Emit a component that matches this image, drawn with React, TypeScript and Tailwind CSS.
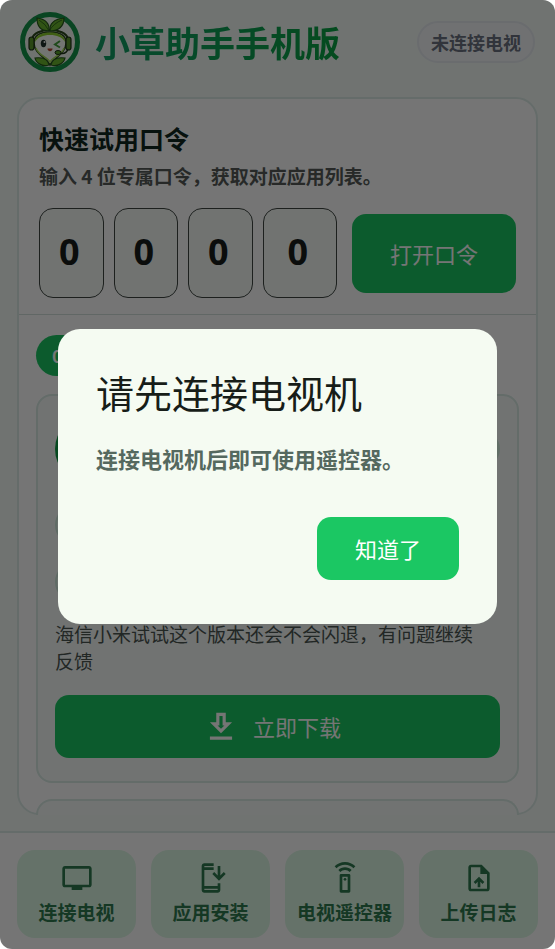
import React, { useState } from 'react';
import type { IconType } from 'react-icons';
import {
  MdOutlineDownload,
  MdOutlineInstallMobile,
  MdOutlineSettingsRemote,
  MdOutlineTv,
  MdOutlineUploadFile,
} from 'react-icons/md';

const navItems: { label: string; icon: IconType }[] = [
  { label: '连接电视', icon: MdOutlineTv },
  { label: '应用安装', icon: MdOutlineInstallMobile },
  { label: '电视遥控器', icon: MdOutlineSettingsRemote },
  { label: '上传日志', icon: MdOutlineUploadFile },
];

const Logo: React.FC = () => (
  <svg viewBox="0 0 60 60" className="size-[60px] shrink-0" role="img" aria-label="小草助手">
    <circle cx="30" cy="30" r="27.5" fill="#f4faf4" stroke="#14964a" strokeWidth="5" />
    {/* headset */}
    <path d="M12 27C14 15 46 15 48 27" fill="none" stroke="#2c4a1e" strokeWidth="2" />
    {/* head */}
    <path
      d="M30 53C27 46 14 42 14 31C14 23 21 20 30 20C39 20 46 23 46 31C46 42 33 46 30 53Z"
      fill="#fbfff8"
      stroke="#2c4a1e"
      strokeWidth="1.5"
    />
    <path
      d="M15 30C15 23 22 20.5 30 20.5C38 20.5 45 23 45 30C42 25 37 23 30 23C23 23 18 25 15 30Z"
      fill="#8cd02c"
    />
    <path d="M16 36C18 43 27 45 30 50C33 45 42 43 44 36" fill="none" stroke="#a8dc5a" strokeWidth="1.5" />
    <rect x="9" y="25" width="5" height="13" rx="2.5" fill="#5c9a2c" stroke="#1f3518" strokeWidth="1.2" />
    <rect x="46" y="25" width="5" height="13" rx="2.5" fill="#5c9a2c" stroke="#1f3518" strokeWidth="1.2" />
    {/* leaves */}
    <path d="M29 19C20 19 17 14 17 6C24 7 30 10 29 19Z" fill="#6bb82f" stroke="#27591d" strokeWidth="1.2" />
    <path d="M30 19C29 10 36 7 44 6C44 14 39 19 30 19Z" fill="#6bb82f" stroke="#27591d" strokeWidth="1.2" />
    <path d="M19 8Q26 12 29 19Q34 11 42 8" fill="none" stroke="#27591d" strokeWidth="0.8" />
    <path d="M29 53C22 55 16 51 15 46C22 45 28 47 29 53Z" fill="#6bb82f" stroke="#27591d" strokeWidth="1.2" />
    <path d="M31 53C38 55 44 51 45 46C38 45 32 47 31 53Z" fill="#6bb82f" stroke="#27591d" strokeWidth="1.2" />
    {/* face */}
    <ellipse cx="23.5" cy="31.5" rx="2.7" ry="3.7" fill="#20302c" />
    <circle cx="24.5" cy="30" r="1" fill="#fff" />
    <path d="M40 29L35 32.5L40 35.5" fill="none" stroke="#45a23c" strokeWidth="2" />
    <path d="M27.5 36.5H32.5C32.5 40 27.5 40 27.5 36.5Z" fill="#b5452e" />
    <path d="M48 37Q46 43 39 41" fill="none" stroke="#1f3518" strokeWidth="1.5" />
    <ellipse cx="38" cy="40.5" rx="3" ry="2" fill="#5da52c" stroke="#1f3518" strokeWidth="1" />
  </svg>
);

const CodeForm: React.FC = () => (
  <form className="border-b border-[#d3e0dc] px-5 pt-[21px] pb-4" onSubmit={(e) => e.preventDefault()}>
    <h2 className="text-[25px] leading-9 font-bold text-[#10291f]">快速试用口令</h2>
    <p className="mt-[6px] text-[19px] leading-7 font-bold text-[#555b58]">
      输入 4 位专属口令，获取对应应用列表。
    </p>
    <div className="mt-[18px] flex items-center gap-[15px]">
      <div className="grid flex-1 grid-cols-4">
        {[1, 2, 3, 4].map((n) => (
          <div key={n} className="pr-[10px] last:pr-0">
            <input
              aria-label={`口令第 ${n} 位`}
              defaultValue="0"
              maxLength={1}
              inputMode="numeric"
              className="h-[90px] w-full rounded-[14px] border border-[#3f4642] bg-[#f6fbf7] pr-1 pb-1 text-center font-['Noto_Sans'] text-[36px] font-bold text-[#191e1b]"
            />
          </div>
        ))}
      </div>
      <button type="submit" className="h-[79px] w-[164px] rounded-[14px] bg-[#1bc763] text-[22px] text-white">
        打开口令
      </button>
    </div>
  </form>
);

const AppItem: React.FC = () => (
  <article className="rounded-[16px] border-2 border-[#d9ebe5] bg-[#f6fbf9] px-[17px] pt-[19px] pb-[23px]">
    <div className="flex items-center justify-between">
      <span className="size-[68px] rounded-full bg-[#0fa047]" />
      <span className="h-9 w-24 rounded-full bg-[#d3efdf]" />
    </div>
    <div className="mt-[22px] flex flex-col items-start gap-[17px]">
      <span className="h-10 w-40 rounded-full border-2 border-[#cfe9dc] bg-[#eef8f2]" />
      <span className="h-10 w-40 rounded-full border-2 border-[#cfe9dc] bg-[#eef8f2]" />
    </div>
    <p className="mt-[18px] pr-4 text-[19px] leading-[27px] text-[#4b5551]">
      海信小米试试这个版本还会不会闪退，有问题继续反馈
    </p>
    <button
      type="button"
      className="mt-[21px] flex h-[63px] w-full items-center justify-center gap-[13px] rounded-[14px] bg-[#1bc763] pr-3 text-[22px] text-white"
    >
      <MdOutlineDownload className="size-[38px]" />
      立即下载
    </button>
  </article>
);

const App: React.FC = () => {
  const [open, setOpen] = useState(true);

  return (
    <div className="min-h-screen bg-white font-['Noto_Sans_CJK_SC',sans-serif]">
      <div className="flex min-h-screen flex-col overflow-hidden rounded-[12px] bg-[#f5faf7]">
        <header className="flex items-center px-5 py-3">
          <Logo />
          <h1 className="ml-[15px] bg-linear-to-r from-[#12a066] to-[#0aa343] bg-clip-text text-[35px] leading-[60px] font-bold whitespace-nowrap text-transparent">
            小草助手手机版
          </h1>
          <span className="ml-auto rounded-full border-2 border-[#e6ebf0] bg-[#f4f6f9] px-3 py-[5px] text-[18px] leading-7 font-bold whitespace-nowrap text-[#6b7280]">
            未连接电视
          </span>
        </header>

        <main className="mx-[17px] mt-[13px] mb-4 flex flex-1 flex-col rounded-[22px] border-2 border-[#dcece7] bg-white">
          <CodeForm />
          <div className="-mb-[2px] flex flex-1 flex-col px-[17px] pt-5">
            <button
              type="button"
              className="mb-[18px] h-[41px] self-start rounded-full bg-[#1bc763] px-4 text-[18px] font-bold text-white"
            >
              0000
            </button>
            <AppItem />
            <div className="mt-4 min-h-4 flex-1 rounded-t-[16px] border-2 border-b-0 border-[#d9ebe5] bg-[#f6fbf9]" />
          </div>
        </main>

        <nav className="grid grid-cols-4 gap-[15px] border-t-2 border-[#dcece7] bg-white px-[17px] pt-[17px] pb-[11px]">
          {navItems.map(({ label, icon: Icon }) => (
            <button
              key={label}
              type="button"
              className="flex h-[88px] flex-col items-center justify-center gap-1 rounded-[18px] bg-[#dcf8e5] text-[19px] leading-7 font-bold whitespace-nowrap text-[#2f7a50]"
            >
              <Icon className="size-8" />
              {label}
            </button>
          ))}
        </nav>
      </div>

      {open && (
        <div className="fixed inset-0 flex items-center justify-center rounded-[12px] bg-black/54 px-[58px] pt-1">
          <div
            role="dialog"
            aria-modal="true"
            aria-labelledby="dialog-title"
            className="flex w-full flex-col rounded-[22px] bg-[#f5fbf2] px-[38px] pt-9 pb-[44px]"
          >
            <h2 id="dialog-title" className="text-[38px] leading-[54px] text-[#171d18]">
              请先连接电视机
            </h2>
            <p className="mt-[23px] text-[22px] leading-8 font-bold text-[#55695f]">
              连接电视机后即可使用遥控器。
            </p>
            <button
              type="button"
              onClick={() => setOpen(false)}
              className="mt-[43px] h-[63px] w-[142px] self-end rounded-[14px] bg-[#1bc763] text-[22px] text-white"
            >
              知道了
            </button>
          </div>
        </div>
      )}
    </div>
  );
};

export default App;
